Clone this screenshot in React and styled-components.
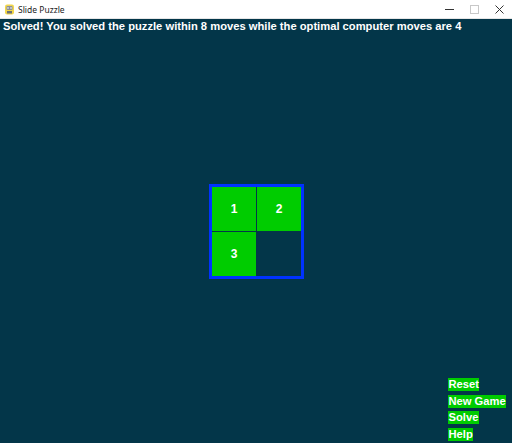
import React from 'react';
import styled, { createGlobalStyle } from 'styled-components';

const GlobalStyle = createGlobalStyle`
  html, body {
    margin: 0;
    padding: 0;
    background: #033649;
  }
`

const Window = styled.div`
  width: 512px;
  height: 443px;
  display: flex;
  flex-direction: column;
  overflow: hidden;
  font-family: "Liberation Sans", Arial, sans-serif;
`

const TitleBar = styled.div`
  height: 19px;
  flex: none;
  background: #ffffff;
  display: flex;
  align-items: center;
  border-bottom: 1px solid #e6e6e6;
  box-sizing: border-box;
`

const TitleText = styled.span`
  font-family: "Noto Sans", "Liberation Sans", sans-serif;
  font-size: 8.5px;
  color: #222;
  margin-left: 3px;
  flex: 1;
`

const Controls = styled.div`
  display: flex;
  height: 100%;
`

const ControlBtn = styled.div`
  width: 25px;
  height: 100%;
  display: flex;
  align-items: center;
  justify-content: center;
`

const Canvas = styled.div`
  flex: 1;
  background: #033649;
  display: grid;
  grid-template: 1fr / 1fr;
  color: #ffffff;
  font-weight: bold;
  font-size: 11.2px;
`

const Message = styled.div`
  grid-area: 1 / 1;
  justify-self: start;
  align-self: start;
  margin: 1px 0 0 3px;
  line-height: 13px;
  white-space: nowrap;
`

const Board = styled.div`
  grid-area: 1 / 1;
  justify-self: center;
  align-self: center;
  border: 3px solid #0032ff;
  display: grid;
  grid-template-columns: 44px 44px;
  grid-template-rows: 44px 44px;
  gap: 1px;
  margin-left: 1px;
`

const Tile = styled.div`
  background: ${p => (p.$empty ? 'transparent' : '#00cc00')};
  display: flex;
  align-items: center;
  justify-content: center;
  font-size: 12px;
`

const Menu = styled.div`
  grid-area: 1 / 1;
  justify-self: end;
  align-self: end;
  width: 64px;
  display: flex;
  flex-direction: column;
  align-items: flex-start;
  gap: 3.6px;
  margin-bottom: 2px;
`

const MenuButton = styled.span`
  background: #00cc00;
  line-height: 13px;
  padding: 0 0.5px;
  white-space: nowrap;
`

const PygameIcon = () => (
  <svg width="11" height="11" viewBox="0 0 11 11" style={{ marginLeft: 4 }}>
    <rect x="1" y="0.5" width="9" height="10" rx="2" fill="#f2d64b" />
    <rect x="2.5" y="2" width="6" height="4" rx="1" fill="#8a8f99" />
    <circle cx="4" cy="4" r="0.8" fill="#fff" />
    <circle cx="7" cy="4" r="0.8" fill="#fff" />
    <rect x="3" y="7" width="5" height="2.5" fill="#6b6f77" />
  </svg>
)

const tiles = [
  { n: 1 },
  { n: 2 },
  { n: 3 },
  { n: null },
];

export default function App() {
  return (
    <>
      <GlobalStyle />
      <Window>
        <TitleBar>
          <PygameIcon />
          <TitleText>Slide Puzzle</TitleText>
          <Controls>
            <ControlBtn>
              <svg width="9" height="9" viewBox="0 0 9 9">
                <line x1="0" y1="4.5" x2="9" y2="4.5" stroke="#333" strokeWidth="1" />
              </svg>
            </ControlBtn>
            <ControlBtn>
              <svg width="9" height="9" viewBox="0 0 9 9">
                <rect x="0.5" y="0.5" width="8" height="8" fill="none" stroke="#c8c8c8" strokeWidth="1" />
              </svg>
            </ControlBtn>
            <ControlBtn>
              <svg width="9" height="9" viewBox="0 0 9 9">
                <path d="M0.5 0.5 L8.5 8.5 M8.5 0.5 L0.5 8.5" stroke="#333" strokeWidth="1" />
              </svg>
            </ControlBtn>
          </Controls>
        </TitleBar>
        <Canvas>
          <Message>
            Solved! You solved the puzzle within 8 moves while the optimal computer moves are 4
          </Message>
          <Board>
            {tiles.map((t, i) => (
              <Tile key={i} $empty={t.n === null}>{t.n}</Tile>
            ))}
          </Board>
          <Menu>
            <MenuButton>Reset</MenuButton>
            <MenuButton>New Game</MenuButton>
            <MenuButton>Solve</MenuButton>
            <MenuButton>Help</MenuButton>
          </Menu>
        </Canvas>
      </Window>
    </>
  );
}
